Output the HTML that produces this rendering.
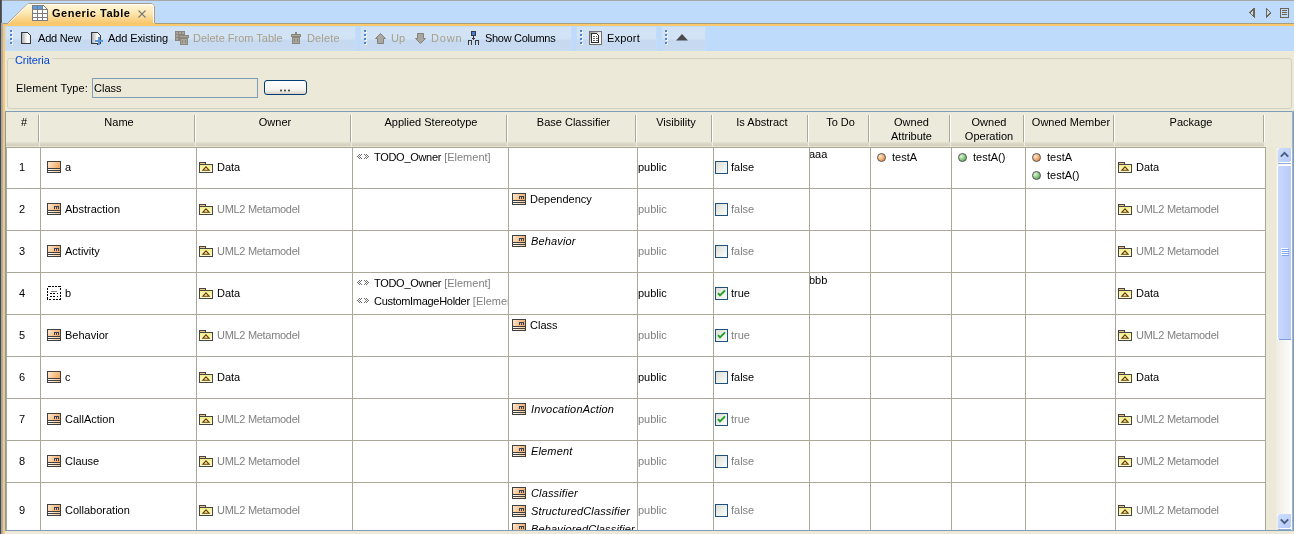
<!DOCTYPE html>
<html><head><meta charset="utf-8"><title>Generic Table</title>
<style>
*{margin:0;padding:0;box-sizing:border-box}
html,body{width:1294px;height:534px;overflow:hidden}
body{position:relative;background:#ECE9D8;font:11px "Liberation Sans", sans-serif;color:#000}
.a{position:absolute}
.t{position:absolute;white-space:nowrap;line-height:13px;font-size:11px;letter-spacing:0px}
.n{letter-spacing:-0.3px}
.dis{color:#A79F88}
.g{color:#808080}
.i{font-style:italic}
.hdr{position:absolute;text-align:center;line-height:14px;letter-spacing:0px}
#root{position:absolute;left:0;top:0;width:1294px;height:534px;overflow:hidden;background:#ECE9D8;will-change:transform}
</style></head><body><div id="root">

<div class="a" style="left:0px;top:0px;width:1294px;height:23px;background:#BFDBFB"></div>
<div class="a" style="left:0px;top:0px;width:1294px;height:1px;background:#A8A8A8"></div>
<div class="a" style="left:155px;top:23px;width:1139px;height:1px;background:#A59D86"></div>
<div class="a" style="left:2px;top:23px;width:6px;height:1px;background:#A59D86"></div>
<div class="a" style="left:3px;top:24px;width:1291px;height:2px;background:#FAC96B"></div>
<svg class="a" style="left:0;top:0" width="160" height="26" viewBox="0 0 160 26">
<defs><linearGradient id="tg" x1="0" y1="0" x2="0" y2="1">
<stop offset="0" stop-color="#FFF9E3"/><stop offset="0.45" stop-color="#FDE9B4"/><stop offset="1" stop-color="#F7C56A"/></linearGradient></defs>
<path d="M3,24 L3,23 L7.5,23 L27,4 Q28,3 30,3 L151,3 Q155,3 155,7 L155,24 Z" fill="url(#tg)"/>
<path d="M2,23.5 L7.5,23.5 L27,4.5 Q28,3.5 30,3.5 L151,3.5 Q154.5,3.5 154.5,7 L154.5,23" fill="none" stroke="#A49C86" stroke-width="1"/>
<path d="M8.5,23.5 L28,4.5 L151,4.5 Q153.5,4.5 153.5,7 L153.5,23" fill="none" stroke="#FFFFFF" stroke-width="1" opacity="0.9"/>
</svg>
<svg class="a" style="left:32px;top:5px" width="17" height="17" viewBox="0 0 17 17" shape-rendering="crispEdges">
<rect x="0.5" y="0.5" width="15" height="15" fill="#FFFFFF" stroke="#7D7D7D"/>
<rect x="1" y="1" width="4" height="3" fill="#5F9CE0"/><rect x="6" y="1" width="4" height="3" fill="#5F9CE0"/>
<path d="M0,4.5H16M0,8.5H16M0,12.5H16M5.5,0V16M10.5,0V16" stroke="#7D7D7D"/>
<path d="M11.5,0H17V5.5Z" fill="#FDF1CF"/><path d="M11.5,0.5L15.5,4.5" stroke="#7D7D7D" shape-rendering="geometricPrecision"/>
</svg>
<div class="t" style="left:52px;top:7px;font-weight:bold;letter-spacing:0.5px">Generic Table</div>
<svg class="a" style="left:138px;top:10px" width="9" height="8" viewBox="0 0 9 8" shape-rendering="crispEdges"><path d="M0.5,0.5L7.5,7.5M7.5,0.5L0.5,7.5" stroke="#7A7A7A" stroke-width="1.1" shape-rendering="geometricPrecision"/></svg>
<svg class="a" style="left:1249px;top:8px" width="6" height="10" viewBox="0 0 6 10" shape-rendering="crispEdges"><path d="M5,0.5V9L0.8,4.75Z" fill="none" stroke="#6E6650" stroke-width="1.1"/></svg>
<svg class="a" style="left:1266px;top:8px" width="6" height="10" viewBox="0 0 6 10" shape-rendering="crispEdges"><path d="M0.5,0.5V9L4.7,4.75Z" fill="none" stroke="#6E6650" stroke-width="1.1"/></svg>
<svg class="a" style="left:1280px;top:8px" width="9" height="10" viewBox="0 0 9 10" shape-rendering="crispEdges"><rect x="0.5" y="0.5" width="8" height="9" fill="none" stroke="#6E6650"/><path d="M2,2.5H7M2,4.5H7M2,6.5H7" stroke="#6E6650"/></svg>
<div class="a" style="left:0px;top:0px;width:1px;height:534px;background:#474747"></div>
<div class="a" style="left:1px;top:0px;width:1px;height:23px;background:#5E5E5E"></div>
<div class="a" style="left:1px;top:23px;width:1px;height:511px;background:#A6A6A6"></div>
<div class="a" style="left:2px;top:23px;width:1px;height:511px;background:#B0B0B0"></div>
<div class="a" style="left:3px;top:24px;width:2px;height:510px;background:#FAC96B"></div>
<div class="a" style="left:5px;top:26px;width:1289px;height:25px;background:#BFDBFB"></div>
<div class="a" style="left:5px;top:26px;width:351px;height:25px;background:linear-gradient(#D3E3F6 0px,#D3E3F6 12px,#C5D9F1 13px,#C7DAF2 22px,#CCE0F8 24px);border:1px solid #C5DCF6;border-bottom-color:#C5DEFB"></div>
<div class="a" style="left:360px;top:26px;width:212px;height:25px;background:linear-gradient(#D3E3F6 0px,#D3E3F6 12px,#C5D9F1 13px,#C7DAF2 22px,#CCE0F8 24px);border:1px solid #C5DCF6;border-bottom-color:#C5DEFB"></div>
<div class="a" style="left:576px;top:26px;width:81px;height:25px;background:linear-gradient(#D3E3F6 0px,#D3E3F6 12px,#C5D9F1 13px,#C7DAF2 22px,#CCE0F8 24px);border:1px solid #C5DCF6;border-bottom-color:#C5DEFB"></div>
<div class="a" style="left:661px;top:26px;width:45px;height:25px;background:linear-gradient(#D3E3F6 0px,#D3E3F6 12px,#C5D9F1 13px,#C7DAF2 22px,#CCE0F8 24px);border:1px solid #C5DCF6;border-bottom-color:#C5DEFB"></div>
<svg class="a" style="left:10px;top:29px" width="3" height="16" viewBox="0 0 3 16" shape-rendering="crispEdges"><rect x="0" y="1" width="2" height="2" fill="#4C86D1"/><rect x="1" y="2" width="2" height="2" fill="#FFFFFF"/><rect x="0" y="1" width="2" height="2" fill="#4C86D1"/><rect x="0" y="5" width="2" height="2" fill="#4C86D1"/><rect x="1" y="6" width="2" height="2" fill="#FFFFFF"/><rect x="0" y="5" width="2" height="2" fill="#4C86D1"/><rect x="0" y="9" width="2" height="2" fill="#4C86D1"/><rect x="1" y="10" width="2" height="2" fill="#FFFFFF"/><rect x="0" y="9" width="2" height="2" fill="#4C86D1"/><rect x="0" y="13" width="2" height="2" fill="#4C86D1"/><rect x="1" y="14" width="2" height="2" fill="#FFFFFF"/><rect x="0" y="13" width="2" height="2" fill="#4C86D1"/></svg>
<svg class="a" style="left:364px;top:29px" width="3" height="16" viewBox="0 0 3 16" shape-rendering="crispEdges"><rect x="0" y="1" width="2" height="2" fill="#4C86D1"/><rect x="1" y="2" width="2" height="2" fill="#FFFFFF"/><rect x="0" y="1" width="2" height="2" fill="#4C86D1"/><rect x="0" y="5" width="2" height="2" fill="#4C86D1"/><rect x="1" y="6" width="2" height="2" fill="#FFFFFF"/><rect x="0" y="5" width="2" height="2" fill="#4C86D1"/><rect x="0" y="9" width="2" height="2" fill="#4C86D1"/><rect x="1" y="10" width="2" height="2" fill="#FFFFFF"/><rect x="0" y="9" width="2" height="2" fill="#4C86D1"/><rect x="0" y="13" width="2" height="2" fill="#4C86D1"/><rect x="1" y="14" width="2" height="2" fill="#FFFFFF"/><rect x="0" y="13" width="2" height="2" fill="#4C86D1"/></svg>
<svg class="a" style="left:580px;top:29px" width="3" height="16" viewBox="0 0 3 16" shape-rendering="crispEdges"><rect x="0" y="1" width="2" height="2" fill="#4C86D1"/><rect x="1" y="2" width="2" height="2" fill="#FFFFFF"/><rect x="0" y="1" width="2" height="2" fill="#4C86D1"/><rect x="0" y="5" width="2" height="2" fill="#4C86D1"/><rect x="1" y="6" width="2" height="2" fill="#FFFFFF"/><rect x="0" y="5" width="2" height="2" fill="#4C86D1"/><rect x="0" y="9" width="2" height="2" fill="#4C86D1"/><rect x="1" y="10" width="2" height="2" fill="#FFFFFF"/><rect x="0" y="9" width="2" height="2" fill="#4C86D1"/><rect x="0" y="13" width="2" height="2" fill="#4C86D1"/><rect x="1" y="14" width="2" height="2" fill="#FFFFFF"/><rect x="0" y="13" width="2" height="2" fill="#4C86D1"/></svg>
<svg class="a" style="left:665px;top:29px" width="3" height="16" viewBox="0 0 3 16" shape-rendering="crispEdges"><rect x="0" y="1" width="2" height="2" fill="#4C86D1"/><rect x="1" y="2" width="2" height="2" fill="#FFFFFF"/><rect x="0" y="1" width="2" height="2" fill="#4C86D1"/><rect x="0" y="5" width="2" height="2" fill="#4C86D1"/><rect x="1" y="6" width="2" height="2" fill="#FFFFFF"/><rect x="0" y="5" width="2" height="2" fill="#4C86D1"/><rect x="0" y="9" width="2" height="2" fill="#4C86D1"/><rect x="1" y="10" width="2" height="2" fill="#FFFFFF"/><rect x="0" y="9" width="2" height="2" fill="#4C86D1"/><rect x="0" y="13" width="2" height="2" fill="#4C86D1"/><rect x="1" y="14" width="2" height="2" fill="#FFFFFF"/><rect x="0" y="13" width="2" height="2" fill="#4C86D1"/></svg>
<svg class="a" style="left:21px;top:32px" width="10" height="12" viewBox="0 0 10 12" shape-rendering="crispEdges"><defs><linearGradient id="dg" x1="0" y1="0" x2="1" y2="0"><stop offset="0" stop-color="#A8A8A8"/><stop offset="0.65" stop-color="#FFFFFF"/><stop offset="1" stop-color="#F4F4F4"/></linearGradient></defs><path d="M0.5,0.5H6.5L9.5,3.5V11.5H0.5Z" fill="url(#dg)" stroke="#3A3A3A" stroke-linejoin="miter"/><rect x="7" y="2" width="1" height="1" fill="#FFFFFF"/></svg>
<div class="t" style="left:38px;top:32px;letter-spacing:-0.2px">Add New</div>
<svg class="a" style="left:91px;top:32px" width="12" height="13" viewBox="0 0 12 13" shape-rendering="crispEdges"><path d="M0.5,0.5H6.5L9.5,3.5V11.5H0.5Z" fill="url(#dg)" stroke="#3A3A3A" stroke-linejoin="miter"/><rect x="7" y="2" width="1" height="1" fill="#FFFFFF"/><path d="M3.5,11.5H4.5M6.5,12.5V12" stroke="#3A3A3A"/><rect x="7" y="5" width="2" height="8" fill="#5B95DA"/><rect x="4" y="8" width="8" height="2" fill="#5B95DA"/></svg>
<div class="t" style="left:108px;top:32px;letter-spacing:-0.1px">Add Existing</div>
<svg class="a" style="left:175px;top:31px" width="14" height="14" viewBox="0 0 14 14" shape-rendering="crispEdges"><rect x="0" y="0" width="10" height="10" fill="#8C877D"/>
<rect x="1" y="1" width="2" height="2" fill="#A9A59B"/><rect x="4" y="1" width="2" height="2" fill="#A9A59B"/><rect x="7" y="1" width="2" height="2" fill="#A9A59B"/>
<rect x="1" y="4" width="2" height="2" fill="#A9A59B"/><rect x="1" y="7" width="2" height="2" fill="#A9A59B"/>
<rect x="4" y="4" width="10" height="3" fill="#8C877D"/><rect x="5" y="5" width="8" height="1" fill="#A9A59B"/>
<rect x="5" y="7" width="8" height="7" fill="#8C877D"/><rect x="6" y="8" width="6" height="5" fill="#A9A59B"/><rect x="7" y="9" width="1" height="3" fill="#8C877D"/><rect x="10" y="9" width="1" height="3" fill="#8C877D"/></svg>
<div class="t dis" style="left:193px;top:32px;">Delete From Table</div>
<svg class="a" style="left:291px;top:32px" width="10" height="12" viewBox="0 0 10 12" shape-rendering="crispEdges"><rect x="4" y="0" width="2" height="2" fill="#8C877D"/><rect x="0" y="2" width="10" height="3" fill="#8C877D"/><rect x="1" y="3" width="8" height="1" fill="#A9A59B"/>
<rect x="1" y="5" width="8" height="7" fill="#8C877D"/><rect x="2" y="6" width="6" height="5" fill="#A9A59B"/><rect x="3" y="7" width="1" height="3" fill="#8C877D"/><rect x="6" y="7" width="1" height="3" fill="#8C877D"/></svg>
<div class="t dis" style="left:307px;top:32px;letter-spacing:0.15px">Delete</div>
<svg class="a" style="left:375px;top:33px" width="11" height="11" viewBox="0 0 11 11" shape-rendering="crispEdges"><path d="M5.5,0.5L10.5,5.5H8.5V10.5H2.5V5.5H0.5Z" fill="#A9A7A1" stroke="#86827A" stroke-width="1" shape-rendering="geometricPrecision"/></svg>
<div class="t dis" style="left:391px;top:32px;">Up</div>
<svg class="a" style="left:415px;top:33px" width="11" height="11" viewBox="0 0 11 11" shape-rendering="crispEdges"><path d="M2.5,0.5H8.5V5.5H10.5L5.5,10.5L0.5,5.5H2.5Z" fill="#A9A7A1" stroke="#86827A" stroke-width="1" shape-rendering="geometricPrecision"/></svg>
<div class="t dis" style="left:431px;top:32px;letter-spacing:0.8px">Down</div>
<svg class="a" style="left:468px;top:31px" width="11" height="14" viewBox="0 0 11 14" shape-rendering="crispEdges"><rect x="3" y="0" width="5" height="5" fill="#3A3A3A"/><rect x="4" y="1" width="3" height="3" fill="#4A7FE0"/>
<rect x="5" y="5" width="1" height="4" fill="#3A3A3A"/><rect x="4" y="7" width="3" height="1" fill="#3A3A3A"/>
<path d="M0.5,14V9.5H3.5V14M7.5,14V9.5H10.5V14" fill="none" stroke="#3A3A3A"/></svg>
<div class="t n" style="left:485px;top:32px;">Show Columns</div>
<svg class="a" style="left:589px;top:31px" width="13" height="14" viewBox="0 0 13 14" shape-rendering="crispEdges"><defs><linearGradient id="eg" x1="0" y1="0" x2="1" y2="1"><stop offset="0" stop-color="#8A8A8A"/><stop offset="0.5" stop-color="#F0F0F0"/><stop offset="1" stop-color="#FFFFFF"/></linearGradient></defs>
<rect x="0.5" y="0.5" width="12" height="13" fill="url(#eg)" stroke="#707070"/>
<path d="M2.5,2.5H7.5L9.5,4.5V11.5H2.5Z" fill="#FFFFFF" stroke="#2E2E2E"/>
<path d="M4,5.5H6M7,5.5H8M4,7.5H6M7,7.5H9M4,9.5H6M7,9.5H9" stroke="#6A6A6A"/></svg>
<div class="t" style="left:607px;top:32px;letter-spacing:0.2px">Export</div>
<svg class="a" style="left:676px;top:34px" width="12" height="7" viewBox="0 0 12 7" shape-rendering="crispEdges"><path d="M6,0L12,6.5H0Z" fill="#4A4A4A" shape-rendering="geometricPrecision"/></svg>
<div class="a" style="left:7px;top:58px;width:1285px;height:51px;border:1px solid #D0D0BF;border-radius:3px"></div>
<div class="a" style="left:15px;top:54px;width:37px;height:10px;background:#ECE9D8"></div>
<div class="t" style="left:15px;top:54px;color:#0046D5;letter-spacing:-0.1px">Criteria</div>
<div class="t" style="left:16px;top:82px;letter-spacing:0.15px">Element Type:</div>
<div class="a" style="left:92px;top:78px;width:166px;height:20px;border:1px solid #7F9DB9;background:#ECE9D8"></div>
<div class="t" style="left:94px;top:82px;">Class</div>
<div class="a" style="left:264px;top:80px;width:43px;height:15px;border:1px solid #003C74;border-radius:3px;background:linear-gradient(#FFFFFF,#F3F2EC 70%,#D6D0C5)"></div>
<svg class="a" style="left:280px;top:89px" width="11" height="4"><ellipse cx="1" cy="1.5" rx="0.75" ry="1.1" fill="#000"/><ellipse cx="5" cy="1.5" rx="0.75" ry="1.1" fill="#000"/><ellipse cx="9" cy="1.5" rx="0.75" ry="1.1" fill="#000"/></svg>
<div class="a" style="left:5px;top:111px;width:1289px;height:420px;border:1px solid #7F9DB9;background:#ECE9D8"></div>
<div class="a" style="left:6px;top:112px;width:1286px;height:35px;background:#EBEADB"></div>
<div class="a" style="left:6px;top:142px;width:1259px;height:5px;background:linear-gradient(#E4E1D1,#CFCBB9 80%,#E9E6D7 80%)"></div>
<div class="a" style="left:6px;top:147px;width:1260px;height:1px;background:#A9A592"></div>
<div class="a" style="left:38px;top:115px;width:1px;height:27px;background:#ACA899"></div>
<div class="a" style="left:39px;top:115px;width:1px;height:27px;background:#FFFFFF"></div>
<div class="a" style="left:39px;top:142px;width:1px;height:5px;background:#EDEBDD"></div>
<div class="a" style="left:194px;top:115px;width:1px;height:27px;background:#ACA899"></div>
<div class="a" style="left:195px;top:115px;width:1px;height:27px;background:#FFFFFF"></div>
<div class="a" style="left:195px;top:142px;width:1px;height:5px;background:#EDEBDD"></div>
<div class="a" style="left:350px;top:115px;width:1px;height:27px;background:#ACA899"></div>
<div class="a" style="left:351px;top:115px;width:1px;height:27px;background:#FFFFFF"></div>
<div class="a" style="left:351px;top:142px;width:1px;height:5px;background:#EDEBDD"></div>
<div class="a" style="left:506px;top:115px;width:1px;height:27px;background:#ACA899"></div>
<div class="a" style="left:507px;top:115px;width:1px;height:27px;background:#FFFFFF"></div>
<div class="a" style="left:507px;top:142px;width:1px;height:5px;background:#EDEBDD"></div>
<div class="a" style="left:635px;top:115px;width:1px;height:27px;background:#ACA899"></div>
<div class="a" style="left:636px;top:115px;width:1px;height:27px;background:#FFFFFF"></div>
<div class="a" style="left:636px;top:142px;width:1px;height:5px;background:#EDEBDD"></div>
<div class="a" style="left:711px;top:115px;width:1px;height:27px;background:#ACA899"></div>
<div class="a" style="left:712px;top:115px;width:1px;height:27px;background:#FFFFFF"></div>
<div class="a" style="left:712px;top:142px;width:1px;height:5px;background:#EDEBDD"></div>
<div class="a" style="left:807px;top:115px;width:1px;height:27px;background:#ACA899"></div>
<div class="a" style="left:808px;top:115px;width:1px;height:27px;background:#FFFFFF"></div>
<div class="a" style="left:808px;top:142px;width:1px;height:5px;background:#EDEBDD"></div>
<div class="a" style="left:868px;top:115px;width:1px;height:27px;background:#ACA899"></div>
<div class="a" style="left:869px;top:115px;width:1px;height:27px;background:#FFFFFF"></div>
<div class="a" style="left:869px;top:142px;width:1px;height:5px;background:#EDEBDD"></div>
<div class="a" style="left:949px;top:115px;width:1px;height:27px;background:#ACA899"></div>
<div class="a" style="left:950px;top:115px;width:1px;height:27px;background:#FFFFFF"></div>
<div class="a" style="left:950px;top:142px;width:1px;height:5px;background:#EDEBDD"></div>
<div class="a" style="left:1023px;top:115px;width:1px;height:27px;background:#ACA899"></div>
<div class="a" style="left:1024px;top:115px;width:1px;height:27px;background:#FFFFFF"></div>
<div class="a" style="left:1024px;top:142px;width:1px;height:5px;background:#EDEBDD"></div>
<div class="a" style="left:1113px;top:115px;width:1px;height:27px;background:#ACA899"></div>
<div class="a" style="left:1114px;top:115px;width:1px;height:27px;background:#FFFFFF"></div>
<div class="a" style="left:1114px;top:142px;width:1px;height:5px;background:#EDEBDD"></div>
<div class="a" style="left:1263px;top:115px;width:1px;height:27px;background:#ACA899"></div>
<div class="a" style="left:1264px;top:115px;width:1px;height:27px;background:#FFFFFF"></div>
<div class="a" style="left:1264px;top:142px;width:1px;height:5px;background:#EDEBDD"></div>
<div class="hdr" style="left:7px;top:115px;width:34px">#</div>
<div class="hdr" style="left:41px;top:115px;width:156px">Name</div>
<div class="hdr" style="left:197px;top:115px;width:156px">Owner</div>
<div class="hdr" style="left:353px;top:115px;width:156px">Applied Stereotype</div>
<div class="hdr" style="left:509px;top:115px;width:129px">Base Classifier</div>
<div class="hdr" style="left:638px;top:115px;width:76px">Visibility</div>
<div class="hdr" style="left:714px;top:115px;width:96px">Is Abstract</div>
<div class="hdr" style="left:810px;top:115px;width:61px">To Do</div>
<div class="hdr" style="left:871px;top:115px;width:81px">Owned<br>Attribute</div>
<div class="hdr" style="left:952px;top:115px;width:74px">Owned<br>Operation</div>
<div class="hdr" style="left:1026px;top:115px;width:90px">Owned Member</div>
<div class="hdr" style="left:1116px;top:115px;width:150px">Package</div>
<div class="a" style="left:6px;top:148px;width:1260px;height:382px;background:#FFFFFF"></div>
<div class="a" style="left:6px;top:148px;width:1px;height:382px;background:#ACA899"></div>
<div class="a" style="left:40px;top:148px;width:1px;height:382px;background:#ACA899"></div>
<div class="a" style="left:196px;top:148px;width:1px;height:382px;background:#ACA899"></div>
<div class="a" style="left:352px;top:148px;width:1px;height:382px;background:#ACA899"></div>
<div class="a" style="left:508px;top:148px;width:1px;height:382px;background:#ACA899"></div>
<div class="a" style="left:637px;top:148px;width:1px;height:382px;background:#ACA899"></div>
<div class="a" style="left:713px;top:148px;width:1px;height:382px;background:#ACA899"></div>
<div class="a" style="left:809px;top:148px;width:1px;height:382px;background:#ACA899"></div>
<div class="a" style="left:870px;top:148px;width:1px;height:382px;background:#ACA899"></div>
<div class="a" style="left:951px;top:148px;width:1px;height:382px;background:#ACA899"></div>
<div class="a" style="left:1025px;top:148px;width:1px;height:382px;background:#ACA899"></div>
<div class="a" style="left:1115px;top:148px;width:1px;height:382px;background:#ACA899"></div>
<div class="a" style="left:1265px;top:148px;width:1px;height:382px;background:#ACA899"></div>
<div class="a" style="left:6px;top:188px;width:1260px;height:1px;background:#ACA899"></div>
<div class="a" style="left:6px;top:230px;width:1260px;height:1px;background:#ACA899"></div>
<div class="a" style="left:6px;top:272px;width:1260px;height:1px;background:#ACA899"></div>
<div class="a" style="left:6px;top:314px;width:1260px;height:1px;background:#ACA899"></div>
<div class="a" style="left:6px;top:356px;width:1260px;height:1px;background:#ACA899"></div>
<div class="a" style="left:6px;top:398px;width:1260px;height:1px;background:#ACA899"></div>
<div class="a" style="left:6px;top:440px;width:1260px;height:1px;background:#ACA899"></div>
<div class="a" style="left:6px;top:482px;width:1260px;height:1px;background:#ACA899"></div>
<div class="a" style="left:1276px;top:148px;width:16px;height:382px;background:linear-gradient(90deg,#EEECE3,#FEFEFB)"></div>
<svg width="0" height="0" style="position:absolute"><defs>
<linearGradient id="cg" x1="0" y1="0" x2="1" y2="0.3"><stop offset="0" stop-color="#FEE9D2"/><stop offset="1" stop-color="#F5AE6A"/></linearGradient>
<linearGradient id="sg" x1="0" y1="0" x2="1" y2="0"><stop offset="0" stop-color="#FFFFFF"/><stop offset="1" stop-color="#F9C894"/></linearGradient>
<linearGradient id="fg" x1="0" y1="0" x2="0" y2="1"><stop offset="0" stop-color="#F3EE86"/><stop offset="1" stop-color="#FFFFD6"/></linearGradient>
<radialGradient id="og" cx="0.35" cy="0.35" r="0.7"><stop offset="0" stop-color="#FFE8CF"/><stop offset="1" stop-color="#E8883A"/></radialGradient>
<radialGradient id="gg" cx="0.35" cy="0.35" r="0.7"><stop offset="0" stop-color="#E3F7DD"/><stop offset="1" stop-color="#4FA84A"/></radialGradient>
<linearGradient id="kg" x1="0" y1="0" x2="1" y2="1"><stop offset="0" stop-color="#DCDCD5"/><stop offset="1" stop-color="#FFFFFF"/></linearGradient>
</defs></svg>
<div class="a" style="left:7px;top:148px;width:33px;height:40px;overflow:hidden">
<div class="t" style="left:12px;top:13px;width:6px;text-align:center">1</div>
</div>
<div class="a" style="left:41px;top:148px;width:155px;height:40px;overflow:hidden">
<svg class="a" style="left:6px;top:13px" width="14" height="12" viewBox="0 0 14 12" shape-rendering="crispEdges"><rect x="0" y="0" width="14" height="12" fill="#3F3F3F"/><rect x="1" y="1" width="12" height="6" fill="url(#cg)"/><rect x="1" y="8" width="12" height="1" fill="url(#sg)"/><rect x="1" y="10" width="12" height="1" fill="url(#sg)"/></svg>
<div class="t" style="left:24px;top:13px;">a</div>
</div>
<div class="a" style="left:197px;top:148px;width:155px;height:40px;overflow:hidden">
<svg class="a" style="left:2px;top:14px" width="14" height="11" viewBox="0 0 14 11" shape-rendering="crispEdges"><rect x="0" y="0" width="7" height="3" fill="#454545"/><rect x="1" y="1" width="5" height="1" fill="#F5BF85"/><rect x="0.5" y="2.5" width="13" height="8" fill="url(#fg)" stroke="#454545"/><path d="M7,4.8L10.2,8.3H3.8Z" fill="none" stroke="#6B3A00" stroke-width="1.1" shape-rendering="geometricPrecision"/></svg>
<div class="t" style="left:20px;top:13px;">Data</div>
</div>
<div class="a" style="left:353px;top:148px;width:155px;height:40px;overflow:hidden">
<svg class="a" style="left:4px;top:6px" width="12" height="5" viewBox="0 0 12 5" shape-rendering="crispEdges"><rect x="2" y="0" width="1" height="1" fill="#6E6E6E"/><rect x="4" y="0" width="1" height="1" fill="#6E6E6E"/><rect x="1" y="1" width="1" height="1" fill="#6E6E6E"/><rect x="3" y="1" width="1" height="1" fill="#6E6E6E"/><rect x="0" y="2" width="1" height="1" fill="#6E6E6E"/><rect x="2" y="2" width="1" height="1" fill="#6E6E6E"/><rect x="1" y="3" width="1" height="1" fill="#6E6E6E"/><rect x="3" y="3" width="1" height="1" fill="#6E6E6E"/><rect x="2" y="4" width="1" height="1" fill="#6E6E6E"/><rect x="4" y="4" width="1" height="1" fill="#6E6E6E"/><rect x="7" y="0" width="1" height="1" fill="#6E6E6E"/><rect x="9" y="0" width="1" height="1" fill="#6E6E6E"/><rect x="8" y="1" width="1" height="1" fill="#6E6E6E"/><rect x="10" y="1" width="1" height="1" fill="#6E6E6E"/><rect x="9" y="2" width="1" height="1" fill="#6E6E6E"/><rect x="11" y="2" width="1" height="1" fill="#6E6E6E"/><rect x="8" y="3" width="1" height="1" fill="#6E6E6E"/><rect x="10" y="3" width="1" height="1" fill="#6E6E6E"/><rect x="7" y="4" width="1" height="1" fill="#6E6E6E"/><rect x="9" y="4" width="1" height="1" fill="#6E6E6E"/></svg>
<div class="t" style="left:21px;top:3px;"><span class="n">TODO_Owner</span> <span class="g">[Element]</span></div>
</div>
<div class="a" style="left:509px;top:148px;width:128px;height:40px;overflow:hidden">
</div>
<div class="a" style="left:638px;top:148px;width:75px;height:40px;overflow:hidden">
<div class="t" style="left:0px;top:13px;">public</div>
</div>
<div class="a" style="left:714px;top:148px;width:95px;height:40px;overflow:hidden">
<svg class="a" style="left:1px;top:13px" width="13" height="13" viewBox="0 0 13 13" shape-rendering="crispEdges"><rect x="0.5" y="0.5" width="12" height="12" fill="url(#kg)" stroke="#1C5180"/></svg>
<div class="t" style="left:17px;top:13px;">false</div>
</div>
<div class="a" style="left:810px;top:148px;width:60px;height:40px;overflow:hidden">
<div class="t" style="left:-1px;top:0px;">aaa</div>
</div>
<div class="a" style="left:871px;top:148px;width:80px;height:40px;overflow:hidden">
<svg class="a" style="left:6px;top:5px" width="9" height="9" viewBox="0 0 9 9" shape-rendering="crispEdges"><circle cx="4.5" cy="4.5" r="4" fill="url(#og)" stroke="#5A5A5A" stroke-width="1" shape-rendering="geometricPrecision"/></svg>
<div class="t" style="left:21px;top:3px;">testA</div>
</div>
<div class="a" style="left:952px;top:148px;width:73px;height:40px;overflow:hidden">
<svg class="a" style="left:6px;top:5px" width="9" height="9" viewBox="0 0 9 9" shape-rendering="crispEdges"><circle cx="4.5" cy="4.5" r="4" fill="url(#gg)" stroke="#5A5A5A" stroke-width="1" shape-rendering="geometricPrecision"/></svg>
<div class="t" style="left:21px;top:3px;">testA()</div>
</div>
<div class="a" style="left:1026px;top:148px;width:89px;height:40px;overflow:hidden">
<svg class="a" style="left:6px;top:5px" width="9" height="9" viewBox="0 0 9 9" shape-rendering="crispEdges"><circle cx="4.5" cy="4.5" r="4" fill="url(#og)" stroke="#5A5A5A" stroke-width="1" shape-rendering="geometricPrecision"/></svg>
<div class="t" style="left:21px;top:3px;">testA</div>
<svg class="a" style="left:6px;top:23px" width="9" height="9" viewBox="0 0 9 9" shape-rendering="crispEdges"><circle cx="4.5" cy="4.5" r="4" fill="url(#gg)" stroke="#5A5A5A" stroke-width="1" shape-rendering="geometricPrecision"/></svg>
<div class="t" style="left:21px;top:21px;">testA()</div>
</div>
<div class="a" style="left:1116px;top:148px;width:149px;height:40px;overflow:hidden">
<svg class="a" style="left:2px;top:14px" width="14" height="11" viewBox="0 0 14 11" shape-rendering="crispEdges"><rect x="0" y="0" width="7" height="3" fill="#454545"/><rect x="1" y="1" width="5" height="1" fill="#F5BF85"/><rect x="0.5" y="2.5" width="13" height="8" fill="url(#fg)" stroke="#454545"/><path d="M7,4.8L10.2,8.3H3.8Z" fill="none" stroke="#6B3A00" stroke-width="1.1" shape-rendering="geometricPrecision"/></svg>
<div class="t" style="left:20px;top:13px;">Data</div>
</div>
<div class="a" style="left:7px;top:190px;width:33px;height:40px;overflow:hidden">
<div class="t" style="left:12px;top:13px;width:6px;text-align:center">2</div>
</div>
<div class="a" style="left:41px;top:190px;width:155px;height:40px;overflow:hidden">
<svg class="a" style="left:6px;top:13px" width="14" height="12" viewBox="0 0 14 12" shape-rendering="crispEdges"><rect x="0" y="0" width="14" height="12" fill="#3F3F3F"/><rect x="1" y="1" width="12" height="6" fill="url(#cg)"/><rect x="1" y="8" width="12" height="1" fill="url(#sg)"/><rect x="1" y="10" width="12" height="1" fill="url(#sg)"/><path d="M7.5,6V3.5H11.5V6M9.5,3.5V6" fill="none" stroke="#34425E" stroke-width="1"/></svg>
<div class="t" style="left:24px;top:13px;">Abstraction</div>
</div>
<div class="a" style="left:197px;top:190px;width:155px;height:40px;overflow:hidden">
<svg class="a" style="left:2px;top:14px" width="14" height="11" viewBox="0 0 14 11" shape-rendering="crispEdges"><rect x="0" y="0" width="7" height="3" fill="#454545"/><rect x="1" y="1" width="5" height="1" fill="#F5BF85"/><rect x="0.5" y="2.5" width="13" height="8" fill="url(#fg)" stroke="#454545"/><path d="M7,4.8L10.2,8.3H3.8Z" fill="none" stroke="#6B3A00" stroke-width="1.1" shape-rendering="geometricPrecision"/></svg>
<div class="t g n" style="left:20px;top:13px;">UML2 Metamodel</div>
</div>
<div class="a" style="left:353px;top:190px;width:155px;height:40px;overflow:hidden">
</div>
<div class="a" style="left:509px;top:190px;width:128px;height:40px;overflow:hidden">
<svg class="a" style="left:3px;top:3px" width="14" height="12" viewBox="0 0 14 12" shape-rendering="crispEdges"><rect x="0" y="0" width="14" height="12" fill="#3F3F3F"/><rect x="1" y="1" width="12" height="6" fill="url(#cg)"/><rect x="1" y="8" width="12" height="1" fill="url(#sg)"/><rect x="1" y="10" width="12" height="1" fill="url(#sg)"/><path d="M7.5,6V3.5H11.5V6M9.5,3.5V6" fill="none" stroke="#34425E" stroke-width="1"/></svg>
<div class="t" style="left:21px;top:3px;">Dependency</div>
</div>
<div class="a" style="left:638px;top:190px;width:75px;height:40px;overflow:hidden">
<div class="t g" style="left:0px;top:13px;">public</div>
</div>
<div class="a" style="left:714px;top:190px;width:95px;height:40px;overflow:hidden">
<svg class="a" style="left:1px;top:13px" width="13" height="13" viewBox="0 0 13 13" shape-rendering="crispEdges"><rect x="0.5" y="0.5" width="12" height="12" fill="url(#kg)" stroke="#1C5180"/></svg>
<div class="t g" style="left:17px;top:13px;">false</div>
</div>
<div class="a" style="left:810px;top:190px;width:60px;height:40px;overflow:hidden">
</div>
<div class="a" style="left:1116px;top:190px;width:149px;height:40px;overflow:hidden">
<svg class="a" style="left:2px;top:14px" width="14" height="11" viewBox="0 0 14 11" shape-rendering="crispEdges"><rect x="0" y="0" width="7" height="3" fill="#454545"/><rect x="1" y="1" width="5" height="1" fill="#F5BF85"/><rect x="0.5" y="2.5" width="13" height="8" fill="url(#fg)" stroke="#454545"/><path d="M7,4.8L10.2,8.3H3.8Z" fill="none" stroke="#6B3A00" stroke-width="1.1" shape-rendering="geometricPrecision"/></svg>
<div class="t g n" style="left:20px;top:13px;">UML2 Metamodel</div>
</div>
<div class="a" style="left:7px;top:232px;width:33px;height:40px;overflow:hidden">
<div class="t" style="left:12px;top:13px;width:6px;text-align:center">3</div>
</div>
<div class="a" style="left:41px;top:232px;width:155px;height:40px;overflow:hidden">
<svg class="a" style="left:6px;top:13px" width="14" height="12" viewBox="0 0 14 12" shape-rendering="crispEdges"><rect x="0" y="0" width="14" height="12" fill="#3F3F3F"/><rect x="1" y="1" width="12" height="6" fill="url(#cg)"/><rect x="1" y="8" width="12" height="1" fill="url(#sg)"/><rect x="1" y="10" width="12" height="1" fill="url(#sg)"/><path d="M7.5,6V3.5H11.5V6M9.5,3.5V6" fill="none" stroke="#34425E" stroke-width="1"/></svg>
<div class="t" style="left:24px;top:13px;">Activity</div>
</div>
<div class="a" style="left:197px;top:232px;width:155px;height:40px;overflow:hidden">
<svg class="a" style="left:2px;top:14px" width="14" height="11" viewBox="0 0 14 11" shape-rendering="crispEdges"><rect x="0" y="0" width="7" height="3" fill="#454545"/><rect x="1" y="1" width="5" height="1" fill="#F5BF85"/><rect x="0.5" y="2.5" width="13" height="8" fill="url(#fg)" stroke="#454545"/><path d="M7,4.8L10.2,8.3H3.8Z" fill="none" stroke="#6B3A00" stroke-width="1.1" shape-rendering="geometricPrecision"/></svg>
<div class="t g n" style="left:20px;top:13px;">UML2 Metamodel</div>
</div>
<div class="a" style="left:353px;top:232px;width:155px;height:40px;overflow:hidden">
</div>
<div class="a" style="left:509px;top:232px;width:128px;height:40px;overflow:hidden">
<svg class="a" style="left:3px;top:3px" width="14" height="12" viewBox="0 0 14 12" shape-rendering="crispEdges"><rect x="0" y="0" width="14" height="12" fill="#3F3F3F"/><rect x="1" y="1" width="12" height="6" fill="url(#cg)"/><rect x="1" y="8" width="12" height="1" fill="url(#sg)"/><rect x="1" y="10" width="12" height="1" fill="url(#sg)"/><path d="M7.5,6V3.5H11.5V6M9.5,3.5V6" fill="none" stroke="#34425E" stroke-width="1"/></svg>
<div class="t" style="left:22px;top:3px;font-style:italic;letter-spacing:0.15px">Behavior</div>
</div>
<div class="a" style="left:638px;top:232px;width:75px;height:40px;overflow:hidden">
<div class="t g" style="left:0px;top:13px;">public</div>
</div>
<div class="a" style="left:714px;top:232px;width:95px;height:40px;overflow:hidden">
<svg class="a" style="left:1px;top:13px" width="13" height="13" viewBox="0 0 13 13" shape-rendering="crispEdges"><rect x="0.5" y="0.5" width="12" height="12" fill="url(#kg)" stroke="#1C5180"/></svg>
<div class="t g" style="left:17px;top:13px;">false</div>
</div>
<div class="a" style="left:810px;top:232px;width:60px;height:40px;overflow:hidden">
</div>
<div class="a" style="left:1116px;top:232px;width:149px;height:40px;overflow:hidden">
<svg class="a" style="left:2px;top:14px" width="14" height="11" viewBox="0 0 14 11" shape-rendering="crispEdges"><rect x="0" y="0" width="7" height="3" fill="#454545"/><rect x="1" y="1" width="5" height="1" fill="#F5BF85"/><rect x="0.5" y="2.5" width="13" height="8" fill="url(#fg)" stroke="#454545"/><path d="M7,4.8L10.2,8.3H3.8Z" fill="none" stroke="#6B3A00" stroke-width="1.1" shape-rendering="geometricPrecision"/></svg>
<div class="t g n" style="left:20px;top:13px;">UML2 Metamodel</div>
</div>
<div class="a" style="left:7px;top:274px;width:33px;height:40px;overflow:hidden">
<div class="t" style="left:12px;top:13px;width:6px;text-align:center">4</div>
</div>
<div class="a" style="left:41px;top:274px;width:155px;height:40px;overflow:hidden">
<svg class="a" style="left:6px;top:12px" width="14" height="14" viewBox="0 0 14 14" shape-rendering="crispEdges"><rect x="0.5" y="0.5" width="13" height="13" rx="1" fill="none" stroke="#000" stroke-dasharray="2,1.3"/><path d="M4,5.5H10" stroke="#888"/><path d="M3,7.5H11M3,10.5H11" stroke="#000" stroke-dasharray="2,1.3"/></svg>
<div class="t" style="left:24px;top:13px;">b</div>
</div>
<div class="a" style="left:197px;top:274px;width:155px;height:40px;overflow:hidden">
<svg class="a" style="left:2px;top:14px" width="14" height="11" viewBox="0 0 14 11" shape-rendering="crispEdges"><rect x="0" y="0" width="7" height="3" fill="#454545"/><rect x="1" y="1" width="5" height="1" fill="#F5BF85"/><rect x="0.5" y="2.5" width="13" height="8" fill="url(#fg)" stroke="#454545"/><path d="M7,4.8L10.2,8.3H3.8Z" fill="none" stroke="#6B3A00" stroke-width="1.1" shape-rendering="geometricPrecision"/></svg>
<div class="t" style="left:20px;top:13px;">Data</div>
</div>
<div class="a" style="left:353px;top:274px;width:155px;height:40px;overflow:hidden">
<svg class="a" style="left:4px;top:6px" width="12" height="5" viewBox="0 0 12 5" shape-rendering="crispEdges"><rect x="2" y="0" width="1" height="1" fill="#6E6E6E"/><rect x="4" y="0" width="1" height="1" fill="#6E6E6E"/><rect x="1" y="1" width="1" height="1" fill="#6E6E6E"/><rect x="3" y="1" width="1" height="1" fill="#6E6E6E"/><rect x="0" y="2" width="1" height="1" fill="#6E6E6E"/><rect x="2" y="2" width="1" height="1" fill="#6E6E6E"/><rect x="1" y="3" width="1" height="1" fill="#6E6E6E"/><rect x="3" y="3" width="1" height="1" fill="#6E6E6E"/><rect x="2" y="4" width="1" height="1" fill="#6E6E6E"/><rect x="4" y="4" width="1" height="1" fill="#6E6E6E"/><rect x="7" y="0" width="1" height="1" fill="#6E6E6E"/><rect x="9" y="0" width="1" height="1" fill="#6E6E6E"/><rect x="8" y="1" width="1" height="1" fill="#6E6E6E"/><rect x="10" y="1" width="1" height="1" fill="#6E6E6E"/><rect x="9" y="2" width="1" height="1" fill="#6E6E6E"/><rect x="11" y="2" width="1" height="1" fill="#6E6E6E"/><rect x="8" y="3" width="1" height="1" fill="#6E6E6E"/><rect x="10" y="3" width="1" height="1" fill="#6E6E6E"/><rect x="7" y="4" width="1" height="1" fill="#6E6E6E"/><rect x="9" y="4" width="1" height="1" fill="#6E6E6E"/></svg>
<div class="t" style="left:21px;top:3px;"><span class="n">TODO_Owner</span> <span class="g">[Element]</span></div>
<svg class="a" style="left:4px;top:24px" width="12" height="5" viewBox="0 0 12 5" shape-rendering="crispEdges"><rect x="2" y="0" width="1" height="1" fill="#6E6E6E"/><rect x="4" y="0" width="1" height="1" fill="#6E6E6E"/><rect x="1" y="1" width="1" height="1" fill="#6E6E6E"/><rect x="3" y="1" width="1" height="1" fill="#6E6E6E"/><rect x="0" y="2" width="1" height="1" fill="#6E6E6E"/><rect x="2" y="2" width="1" height="1" fill="#6E6E6E"/><rect x="1" y="3" width="1" height="1" fill="#6E6E6E"/><rect x="3" y="3" width="1" height="1" fill="#6E6E6E"/><rect x="2" y="4" width="1" height="1" fill="#6E6E6E"/><rect x="4" y="4" width="1" height="1" fill="#6E6E6E"/><rect x="7" y="0" width="1" height="1" fill="#6E6E6E"/><rect x="9" y="0" width="1" height="1" fill="#6E6E6E"/><rect x="8" y="1" width="1" height="1" fill="#6E6E6E"/><rect x="10" y="1" width="1" height="1" fill="#6E6E6E"/><rect x="9" y="2" width="1" height="1" fill="#6E6E6E"/><rect x="11" y="2" width="1" height="1" fill="#6E6E6E"/><rect x="8" y="3" width="1" height="1" fill="#6E6E6E"/><rect x="10" y="3" width="1" height="1" fill="#6E6E6E"/><rect x="7" y="4" width="1" height="1" fill="#6E6E6E"/><rect x="9" y="4" width="1" height="1" fill="#6E6E6E"/></svg>
<div class="t" style="left:21px;top:21px;"><span class="n">CustomImageHolder</span> <span class="g">[Element]</span></div>
</div>
<div class="a" style="left:509px;top:274px;width:128px;height:40px;overflow:hidden">
</div>
<div class="a" style="left:638px;top:274px;width:75px;height:40px;overflow:hidden">
<div class="t" style="left:0px;top:13px;">public</div>
</div>
<div class="a" style="left:714px;top:274px;width:95px;height:40px;overflow:hidden">
<svg class="a" style="left:1px;top:13px" width="13" height="13" viewBox="0 0 13 13" shape-rendering="crispEdges"><rect x="0.5" y="0.5" width="12" height="12" fill="url(#kg)" stroke="#1C5180"/><path d="M3,6.2L5,8.4L10,3.4" fill="none" stroke="#21A121" stroke-width="2" shape-rendering="geometricPrecision"/></svg>
<div class="t" style="left:17px;top:13px;">true</div>
</div>
<div class="a" style="left:810px;top:274px;width:60px;height:40px;overflow:hidden">
<div class="t" style="left:-1px;top:0px;">bbb</div>
</div>
<div class="a" style="left:1116px;top:274px;width:149px;height:40px;overflow:hidden">
<svg class="a" style="left:2px;top:14px" width="14" height="11" viewBox="0 0 14 11" shape-rendering="crispEdges"><rect x="0" y="0" width="7" height="3" fill="#454545"/><rect x="1" y="1" width="5" height="1" fill="#F5BF85"/><rect x="0.5" y="2.5" width="13" height="8" fill="url(#fg)" stroke="#454545"/><path d="M7,4.8L10.2,8.3H3.8Z" fill="none" stroke="#6B3A00" stroke-width="1.1" shape-rendering="geometricPrecision"/></svg>
<div class="t" style="left:20px;top:13px;">Data</div>
</div>
<div class="a" style="left:7px;top:316px;width:33px;height:40px;overflow:hidden">
<div class="t" style="left:12px;top:13px;width:6px;text-align:center">5</div>
</div>
<div class="a" style="left:41px;top:316px;width:155px;height:40px;overflow:hidden">
<svg class="a" style="left:6px;top:13px" width="14" height="12" viewBox="0 0 14 12" shape-rendering="crispEdges"><rect x="0" y="0" width="14" height="12" fill="#3F3F3F"/><rect x="1" y="1" width="12" height="6" fill="url(#cg)"/><rect x="1" y="8" width="12" height="1" fill="url(#sg)"/><rect x="1" y="10" width="12" height="1" fill="url(#sg)"/><path d="M7.5,6V3.5H11.5V6M9.5,3.5V6" fill="none" stroke="#34425E" stroke-width="1"/></svg>
<div class="t" style="left:24px;top:13px;">Behavior</div>
</div>
<div class="a" style="left:197px;top:316px;width:155px;height:40px;overflow:hidden">
<svg class="a" style="left:2px;top:14px" width="14" height="11" viewBox="0 0 14 11" shape-rendering="crispEdges"><rect x="0" y="0" width="7" height="3" fill="#454545"/><rect x="1" y="1" width="5" height="1" fill="#F5BF85"/><rect x="0.5" y="2.5" width="13" height="8" fill="url(#fg)" stroke="#454545"/><path d="M7,4.8L10.2,8.3H3.8Z" fill="none" stroke="#6B3A00" stroke-width="1.1" shape-rendering="geometricPrecision"/></svg>
<div class="t g n" style="left:20px;top:13px;">UML2 Metamodel</div>
</div>
<div class="a" style="left:353px;top:316px;width:155px;height:40px;overflow:hidden">
</div>
<div class="a" style="left:509px;top:316px;width:128px;height:40px;overflow:hidden">
<svg class="a" style="left:3px;top:3px" width="14" height="12" viewBox="0 0 14 12" shape-rendering="crispEdges"><rect x="0" y="0" width="14" height="12" fill="#3F3F3F"/><rect x="1" y="1" width="12" height="6" fill="url(#cg)"/><rect x="1" y="8" width="12" height="1" fill="url(#sg)"/><rect x="1" y="10" width="12" height="1" fill="url(#sg)"/><path d="M7.5,6V3.5H11.5V6M9.5,3.5V6" fill="none" stroke="#34425E" stroke-width="1"/></svg>
<div class="t" style="left:21px;top:3px;">Class</div>
</div>
<div class="a" style="left:638px;top:316px;width:75px;height:40px;overflow:hidden">
<div class="t g" style="left:0px;top:13px;">public</div>
</div>
<div class="a" style="left:714px;top:316px;width:95px;height:40px;overflow:hidden">
<svg class="a" style="left:1px;top:13px" width="13" height="13" viewBox="0 0 13 13" shape-rendering="crispEdges"><rect x="0.5" y="0.5" width="12" height="12" fill="url(#kg)" stroke="#1C5180"/><path d="M3,6.2L5,8.4L10,3.4" fill="none" stroke="#21A121" stroke-width="2" shape-rendering="geometricPrecision"/></svg>
<div class="t g" style="left:17px;top:13px;">true</div>
</div>
<div class="a" style="left:810px;top:316px;width:60px;height:40px;overflow:hidden">
</div>
<div class="a" style="left:1116px;top:316px;width:149px;height:40px;overflow:hidden">
<svg class="a" style="left:2px;top:14px" width="14" height="11" viewBox="0 0 14 11" shape-rendering="crispEdges"><rect x="0" y="0" width="7" height="3" fill="#454545"/><rect x="1" y="1" width="5" height="1" fill="#F5BF85"/><rect x="0.5" y="2.5" width="13" height="8" fill="url(#fg)" stroke="#454545"/><path d="M7,4.8L10.2,8.3H3.8Z" fill="none" stroke="#6B3A00" stroke-width="1.1" shape-rendering="geometricPrecision"/></svg>
<div class="t g n" style="left:20px;top:13px;">UML2 Metamodel</div>
</div>
<div class="a" style="left:7px;top:358px;width:33px;height:40px;overflow:hidden">
<div class="t" style="left:12px;top:13px;width:6px;text-align:center">6</div>
</div>
<div class="a" style="left:41px;top:358px;width:155px;height:40px;overflow:hidden">
<svg class="a" style="left:6px;top:13px" width="14" height="12" viewBox="0 0 14 12" shape-rendering="crispEdges"><rect x="0" y="0" width="14" height="12" fill="#3F3F3F"/><rect x="1" y="1" width="12" height="6" fill="url(#cg)"/><rect x="1" y="8" width="12" height="1" fill="url(#sg)"/><rect x="1" y="10" width="12" height="1" fill="url(#sg)"/></svg>
<div class="t" style="left:24px;top:13px;">c</div>
</div>
<div class="a" style="left:197px;top:358px;width:155px;height:40px;overflow:hidden">
<svg class="a" style="left:2px;top:14px" width="14" height="11" viewBox="0 0 14 11" shape-rendering="crispEdges"><rect x="0" y="0" width="7" height="3" fill="#454545"/><rect x="1" y="1" width="5" height="1" fill="#F5BF85"/><rect x="0.5" y="2.5" width="13" height="8" fill="url(#fg)" stroke="#454545"/><path d="M7,4.8L10.2,8.3H3.8Z" fill="none" stroke="#6B3A00" stroke-width="1.1" shape-rendering="geometricPrecision"/></svg>
<div class="t" style="left:20px;top:13px;">Data</div>
</div>
<div class="a" style="left:353px;top:358px;width:155px;height:40px;overflow:hidden">
</div>
<div class="a" style="left:509px;top:358px;width:128px;height:40px;overflow:hidden">
</div>
<div class="a" style="left:638px;top:358px;width:75px;height:40px;overflow:hidden">
<div class="t" style="left:0px;top:13px;">public</div>
</div>
<div class="a" style="left:714px;top:358px;width:95px;height:40px;overflow:hidden">
<svg class="a" style="left:1px;top:13px" width="13" height="13" viewBox="0 0 13 13" shape-rendering="crispEdges"><rect x="0.5" y="0.5" width="12" height="12" fill="url(#kg)" stroke="#1C5180"/></svg>
<div class="t" style="left:17px;top:13px;">false</div>
</div>
<div class="a" style="left:810px;top:358px;width:60px;height:40px;overflow:hidden">
</div>
<div class="a" style="left:1116px;top:358px;width:149px;height:40px;overflow:hidden">
<svg class="a" style="left:2px;top:14px" width="14" height="11" viewBox="0 0 14 11" shape-rendering="crispEdges"><rect x="0" y="0" width="7" height="3" fill="#454545"/><rect x="1" y="1" width="5" height="1" fill="#F5BF85"/><rect x="0.5" y="2.5" width="13" height="8" fill="url(#fg)" stroke="#454545"/><path d="M7,4.8L10.2,8.3H3.8Z" fill="none" stroke="#6B3A00" stroke-width="1.1" shape-rendering="geometricPrecision"/></svg>
<div class="t" style="left:20px;top:13px;">Data</div>
</div>
<div class="a" style="left:7px;top:400px;width:33px;height:40px;overflow:hidden">
<div class="t" style="left:12px;top:13px;width:6px;text-align:center">7</div>
</div>
<div class="a" style="left:41px;top:400px;width:155px;height:40px;overflow:hidden">
<svg class="a" style="left:6px;top:13px" width="14" height="12" viewBox="0 0 14 12" shape-rendering="crispEdges"><rect x="0" y="0" width="14" height="12" fill="#3F3F3F"/><rect x="1" y="1" width="12" height="6" fill="url(#cg)"/><rect x="1" y="8" width="12" height="1" fill="url(#sg)"/><rect x="1" y="10" width="12" height="1" fill="url(#sg)"/><path d="M7.5,6V3.5H11.5V6M9.5,3.5V6" fill="none" stroke="#34425E" stroke-width="1"/></svg>
<div class="t" style="left:24px;top:13px;">CallAction</div>
</div>
<div class="a" style="left:197px;top:400px;width:155px;height:40px;overflow:hidden">
<svg class="a" style="left:2px;top:14px" width="14" height="11" viewBox="0 0 14 11" shape-rendering="crispEdges"><rect x="0" y="0" width="7" height="3" fill="#454545"/><rect x="1" y="1" width="5" height="1" fill="#F5BF85"/><rect x="0.5" y="2.5" width="13" height="8" fill="url(#fg)" stroke="#454545"/><path d="M7,4.8L10.2,8.3H3.8Z" fill="none" stroke="#6B3A00" stroke-width="1.1" shape-rendering="geometricPrecision"/></svg>
<div class="t g n" style="left:20px;top:13px;">UML2 Metamodel</div>
</div>
<div class="a" style="left:353px;top:400px;width:155px;height:40px;overflow:hidden">
</div>
<div class="a" style="left:509px;top:400px;width:128px;height:40px;overflow:hidden">
<svg class="a" style="left:3px;top:3px" width="14" height="12" viewBox="0 0 14 12" shape-rendering="crispEdges"><rect x="0" y="0" width="14" height="12" fill="#3F3F3F"/><rect x="1" y="1" width="12" height="6" fill="url(#cg)"/><rect x="1" y="8" width="12" height="1" fill="url(#sg)"/><rect x="1" y="10" width="12" height="1" fill="url(#sg)"/><path d="M7.5,6V3.5H11.5V6M9.5,3.5V6" fill="none" stroke="#34425E" stroke-width="1"/></svg>
<div class="t" style="left:22px;top:3px;font-style:italic;letter-spacing:0.15px">InvocationAction</div>
</div>
<div class="a" style="left:638px;top:400px;width:75px;height:40px;overflow:hidden">
<div class="t g" style="left:0px;top:13px;">public</div>
</div>
<div class="a" style="left:714px;top:400px;width:95px;height:40px;overflow:hidden">
<svg class="a" style="left:1px;top:13px" width="13" height="13" viewBox="0 0 13 13" shape-rendering="crispEdges"><rect x="0.5" y="0.5" width="12" height="12" fill="url(#kg)" stroke="#1C5180"/><path d="M3,6.2L5,8.4L10,3.4" fill="none" stroke="#21A121" stroke-width="2" shape-rendering="geometricPrecision"/></svg>
<div class="t g" style="left:17px;top:13px;">true</div>
</div>
<div class="a" style="left:810px;top:400px;width:60px;height:40px;overflow:hidden">
</div>
<div class="a" style="left:1116px;top:400px;width:149px;height:40px;overflow:hidden">
<svg class="a" style="left:2px;top:14px" width="14" height="11" viewBox="0 0 14 11" shape-rendering="crispEdges"><rect x="0" y="0" width="7" height="3" fill="#454545"/><rect x="1" y="1" width="5" height="1" fill="#F5BF85"/><rect x="0.5" y="2.5" width="13" height="8" fill="url(#fg)" stroke="#454545"/><path d="M7,4.8L10.2,8.3H3.8Z" fill="none" stroke="#6B3A00" stroke-width="1.1" shape-rendering="geometricPrecision"/></svg>
<div class="t g n" style="left:20px;top:13px;">UML2 Metamodel</div>
</div>
<div class="a" style="left:7px;top:442px;width:33px;height:40px;overflow:hidden">
<div class="t" style="left:12px;top:13px;width:6px;text-align:center">8</div>
</div>
<div class="a" style="left:41px;top:442px;width:155px;height:40px;overflow:hidden">
<svg class="a" style="left:6px;top:13px" width="14" height="12" viewBox="0 0 14 12" shape-rendering="crispEdges"><rect x="0" y="0" width="14" height="12" fill="#3F3F3F"/><rect x="1" y="1" width="12" height="6" fill="url(#cg)"/><rect x="1" y="8" width="12" height="1" fill="url(#sg)"/><rect x="1" y="10" width="12" height="1" fill="url(#sg)"/><path d="M7.5,6V3.5H11.5V6M9.5,3.5V6" fill="none" stroke="#34425E" stroke-width="1"/></svg>
<div class="t" style="left:24px;top:13px;">Clause</div>
</div>
<div class="a" style="left:197px;top:442px;width:155px;height:40px;overflow:hidden">
<svg class="a" style="left:2px;top:14px" width="14" height="11" viewBox="0 0 14 11" shape-rendering="crispEdges"><rect x="0" y="0" width="7" height="3" fill="#454545"/><rect x="1" y="1" width="5" height="1" fill="#F5BF85"/><rect x="0.5" y="2.5" width="13" height="8" fill="url(#fg)" stroke="#454545"/><path d="M7,4.8L10.2,8.3H3.8Z" fill="none" stroke="#6B3A00" stroke-width="1.1" shape-rendering="geometricPrecision"/></svg>
<div class="t g n" style="left:20px;top:13px;">UML2 Metamodel</div>
</div>
<div class="a" style="left:353px;top:442px;width:155px;height:40px;overflow:hidden">
</div>
<div class="a" style="left:509px;top:442px;width:128px;height:40px;overflow:hidden">
<svg class="a" style="left:3px;top:3px" width="14" height="12" viewBox="0 0 14 12" shape-rendering="crispEdges"><rect x="0" y="0" width="14" height="12" fill="#3F3F3F"/><rect x="1" y="1" width="12" height="6" fill="url(#cg)"/><rect x="1" y="8" width="12" height="1" fill="url(#sg)"/><rect x="1" y="10" width="12" height="1" fill="url(#sg)"/><path d="M7.5,6V3.5H11.5V6M9.5,3.5V6" fill="none" stroke="#34425E" stroke-width="1"/></svg>
<div class="t" style="left:22px;top:3px;font-style:italic;letter-spacing:0.15px">Element</div>
</div>
<div class="a" style="left:638px;top:442px;width:75px;height:40px;overflow:hidden">
<div class="t g" style="left:0px;top:13px;">public</div>
</div>
<div class="a" style="left:714px;top:442px;width:95px;height:40px;overflow:hidden">
<svg class="a" style="left:1px;top:13px" width="13" height="13" viewBox="0 0 13 13" shape-rendering="crispEdges"><rect x="0.5" y="0.5" width="12" height="12" fill="url(#kg)" stroke="#1C5180"/></svg>
<div class="t g" style="left:17px;top:13px;">false</div>
</div>
<div class="a" style="left:810px;top:442px;width:60px;height:40px;overflow:hidden">
</div>
<div class="a" style="left:1116px;top:442px;width:149px;height:40px;overflow:hidden">
<svg class="a" style="left:2px;top:14px" width="14" height="11" viewBox="0 0 14 11" shape-rendering="crispEdges"><rect x="0" y="0" width="7" height="3" fill="#454545"/><rect x="1" y="1" width="5" height="1" fill="#F5BF85"/><rect x="0.5" y="2.5" width="13" height="8" fill="url(#fg)" stroke="#454545"/><path d="M7,4.8L10.2,8.3H3.8Z" fill="none" stroke="#6B3A00" stroke-width="1.1" shape-rendering="geometricPrecision"/></svg>
<div class="t g n" style="left:20px;top:13px;">UML2 Metamodel</div>
</div>
<div class="a" style="left:7px;top:484px;width:33px;height:46px;overflow:hidden">
<div class="t" style="left:12px;top:20px;width:6px;text-align:center">9</div>
</div>
<div class="a" style="left:41px;top:484px;width:155px;height:46px;overflow:hidden">
<svg class="a" style="left:6px;top:20px" width="14" height="12" viewBox="0 0 14 12" shape-rendering="crispEdges"><rect x="0" y="0" width="14" height="12" fill="#3F3F3F"/><rect x="1" y="1" width="12" height="6" fill="url(#cg)"/><rect x="1" y="8" width="12" height="1" fill="url(#sg)"/><rect x="1" y="10" width="12" height="1" fill="url(#sg)"/><path d="M7.5,6V3.5H11.5V6M9.5,3.5V6" fill="none" stroke="#34425E" stroke-width="1"/></svg>
<div class="t" style="left:24px;top:20px;">Collaboration</div>
</div>
<div class="a" style="left:197px;top:484px;width:155px;height:46px;overflow:hidden">
<svg class="a" style="left:2px;top:21px" width="14" height="11" viewBox="0 0 14 11" shape-rendering="crispEdges"><rect x="0" y="0" width="7" height="3" fill="#454545"/><rect x="1" y="1" width="5" height="1" fill="#F5BF85"/><rect x="0.5" y="2.5" width="13" height="8" fill="url(#fg)" stroke="#454545"/><path d="M7,4.8L10.2,8.3H3.8Z" fill="none" stroke="#6B3A00" stroke-width="1.1" shape-rendering="geometricPrecision"/></svg>
<div class="t g n" style="left:20px;top:20px;">UML2 Metamodel</div>
</div>
<div class="a" style="left:353px;top:484px;width:155px;height:46px;overflow:hidden">
</div>
<div class="a" style="left:509px;top:484px;width:128px;height:46px;overflow:hidden">
<svg class="a" style="left:3px;top:3px" width="14" height="12" viewBox="0 0 14 12" shape-rendering="crispEdges"><rect x="0" y="0" width="14" height="12" fill="#3F3F3F"/><rect x="1" y="1" width="12" height="6" fill="url(#cg)"/><rect x="1" y="8" width="12" height="1" fill="url(#sg)"/><rect x="1" y="10" width="12" height="1" fill="url(#sg)"/><path d="M7.5,6V3.5H11.5V6M9.5,3.5V6" fill="none" stroke="#34425E" stroke-width="1"/></svg>
<div class="t" style="left:22px;top:3px;font-style:italic;letter-spacing:0.15px">Classifier</div>
<svg class="a" style="left:3px;top:21px" width="14" height="12" viewBox="0 0 14 12" shape-rendering="crispEdges"><rect x="0" y="0" width="14" height="12" fill="#3F3F3F"/><rect x="1" y="1" width="12" height="6" fill="url(#cg)"/><rect x="1" y="8" width="12" height="1" fill="url(#sg)"/><rect x="1" y="10" width="12" height="1" fill="url(#sg)"/><path d="M7.5,6V3.5H11.5V6M9.5,3.5V6" fill="none" stroke="#34425E" stroke-width="1"/></svg>
<div class="t" style="left:22px;top:21px;font-style:italic;letter-spacing:0.15px">StructuredClassifier</div>
<svg class="a" style="left:3px;top:39px" width="14" height="12" viewBox="0 0 14 12" shape-rendering="crispEdges"><rect x="0" y="0" width="14" height="12" fill="#3F3F3F"/><rect x="1" y="1" width="12" height="6" fill="url(#cg)"/><rect x="1" y="8" width="12" height="1" fill="url(#sg)"/><rect x="1" y="10" width="12" height="1" fill="url(#sg)"/><path d="M7.5,6V3.5H11.5V6M9.5,3.5V6" fill="none" stroke="#34425E" stroke-width="1"/></svg>
<div class="t" style="left:22px;top:39px;font-style:italic;letter-spacing:0.15px">BehavioredClassifier</div>
</div>
<div class="a" style="left:638px;top:484px;width:75px;height:46px;overflow:hidden">
<div class="t g" style="left:0px;top:20px;">public</div>
</div>
<div class="a" style="left:714px;top:484px;width:95px;height:46px;overflow:hidden">
<svg class="a" style="left:1px;top:20px" width="13" height="13" viewBox="0 0 13 13" shape-rendering="crispEdges"><rect x="0.5" y="0.5" width="12" height="12" fill="url(#kg)" stroke="#1C5180"/></svg>
<div class="t g" style="left:17px;top:20px;">false</div>
</div>
<div class="a" style="left:810px;top:484px;width:60px;height:46px;overflow:hidden">
</div>
<div class="a" style="left:1116px;top:484px;width:149px;height:46px;overflow:hidden">
<svg class="a" style="left:2px;top:21px" width="14" height="11" viewBox="0 0 14 11" shape-rendering="crispEdges"><rect x="0" y="0" width="7" height="3" fill="#454545"/><rect x="1" y="1" width="5" height="1" fill="#F5BF85"/><rect x="0.5" y="2.5" width="13" height="8" fill="url(#fg)" stroke="#454545"/><path d="M7,4.8L10.2,8.3H3.8Z" fill="none" stroke="#6B3A00" stroke-width="1.1" shape-rendering="geometricPrecision"/></svg>
<div class="t g n" style="left:20px;top:20px;">UML2 Metamodel</div>
</div>
<svg width="0" height="0" style="position:absolute"><defs>
<linearGradient id="sbg" x1="0" y1="0" x2="1" y2="1"><stop offset="0" stop-color="#D0DEFD"/><stop offset="1" stop-color="#B4CAF8"/></linearGradient>
<linearGradient id="thg" x1="0" y1="0" x2="1" y2="0"><stop offset="0" stop-color="#CAD8FC"/><stop offset="1" stop-color="#B7CCF9"/></linearGradient>
</defs></svg>
<svg class="a" style="left:1277px;top:147px" width="15" height="17" viewBox="0 0 15 17" shape-rendering="crispEdges"><rect x="0.5" y="0.5" width="14" height="15" rx="2" fill="#FFFFFF"/><rect x="1" y="1" width="13" height="14" rx="2" fill="url(#sbg)"/><path d="M1,16.5H14" stroke="#90AAE2"/><path d="M3.8,9.6L7.5,5.9L11.2,9.6" fill="none" stroke="#4D6185" stroke-width="2" stroke-linejoin="miter" shape-rendering="geometricPrecision"/></svg>
<svg class="a" style="left:1277px;top:513px" width="15" height="17" viewBox="0 0 15 17" shape-rendering="crispEdges"><rect x="0.5" y="0.5" width="14" height="15" rx="2" fill="#FFFFFF"/><rect x="1" y="1" width="13" height="14" rx="2" fill="url(#sbg)"/><path d="M1,16.5H14" stroke="#90AAE2"/><path d="M3.8,6.4L7.5,10.1L11.2,6.4" fill="none" stroke="#4D6185" stroke-width="2" stroke-linejoin="miter" shape-rendering="geometricPrecision"/></svg>
<svg class="a" style="left:1277px;top:165px" width="15" height="176" viewBox="0 0 15 176" shape-rendering="crispEdges"><rect x="0.5" y="0.5" width="14" height="174" rx="2" fill="url(#thg)" stroke="#FFFFFF"/><path d="M1.5,174.5H13.5" stroke="#7F9DE0"/><path d="M4,83.5H11" stroke="#FFFFFF"/><path d="M5,84.5H12" stroke="#7EA4EE"/><path d="M4,85.5H11" stroke="#FFFFFF"/><path d="M5,86.5H12" stroke="#7EA4EE"/><path d="M4,87.5H11" stroke="#FFFFFF"/><path d="M5,88.5H12" stroke="#7EA4EE"/><path d="M4,89.5H11" stroke="#FFFFFF"/><path d="M5,90.5H12" stroke="#7EA4EE"/></svg>
<div class="a" style="left:1292px;top:111px;width:1px;height:420px;background:#9DB3CB"></div>
<div class="a" style="left:1293px;top:111px;width:1px;height:420px;background:#7F9DB9"></div>
</div></body></html>
